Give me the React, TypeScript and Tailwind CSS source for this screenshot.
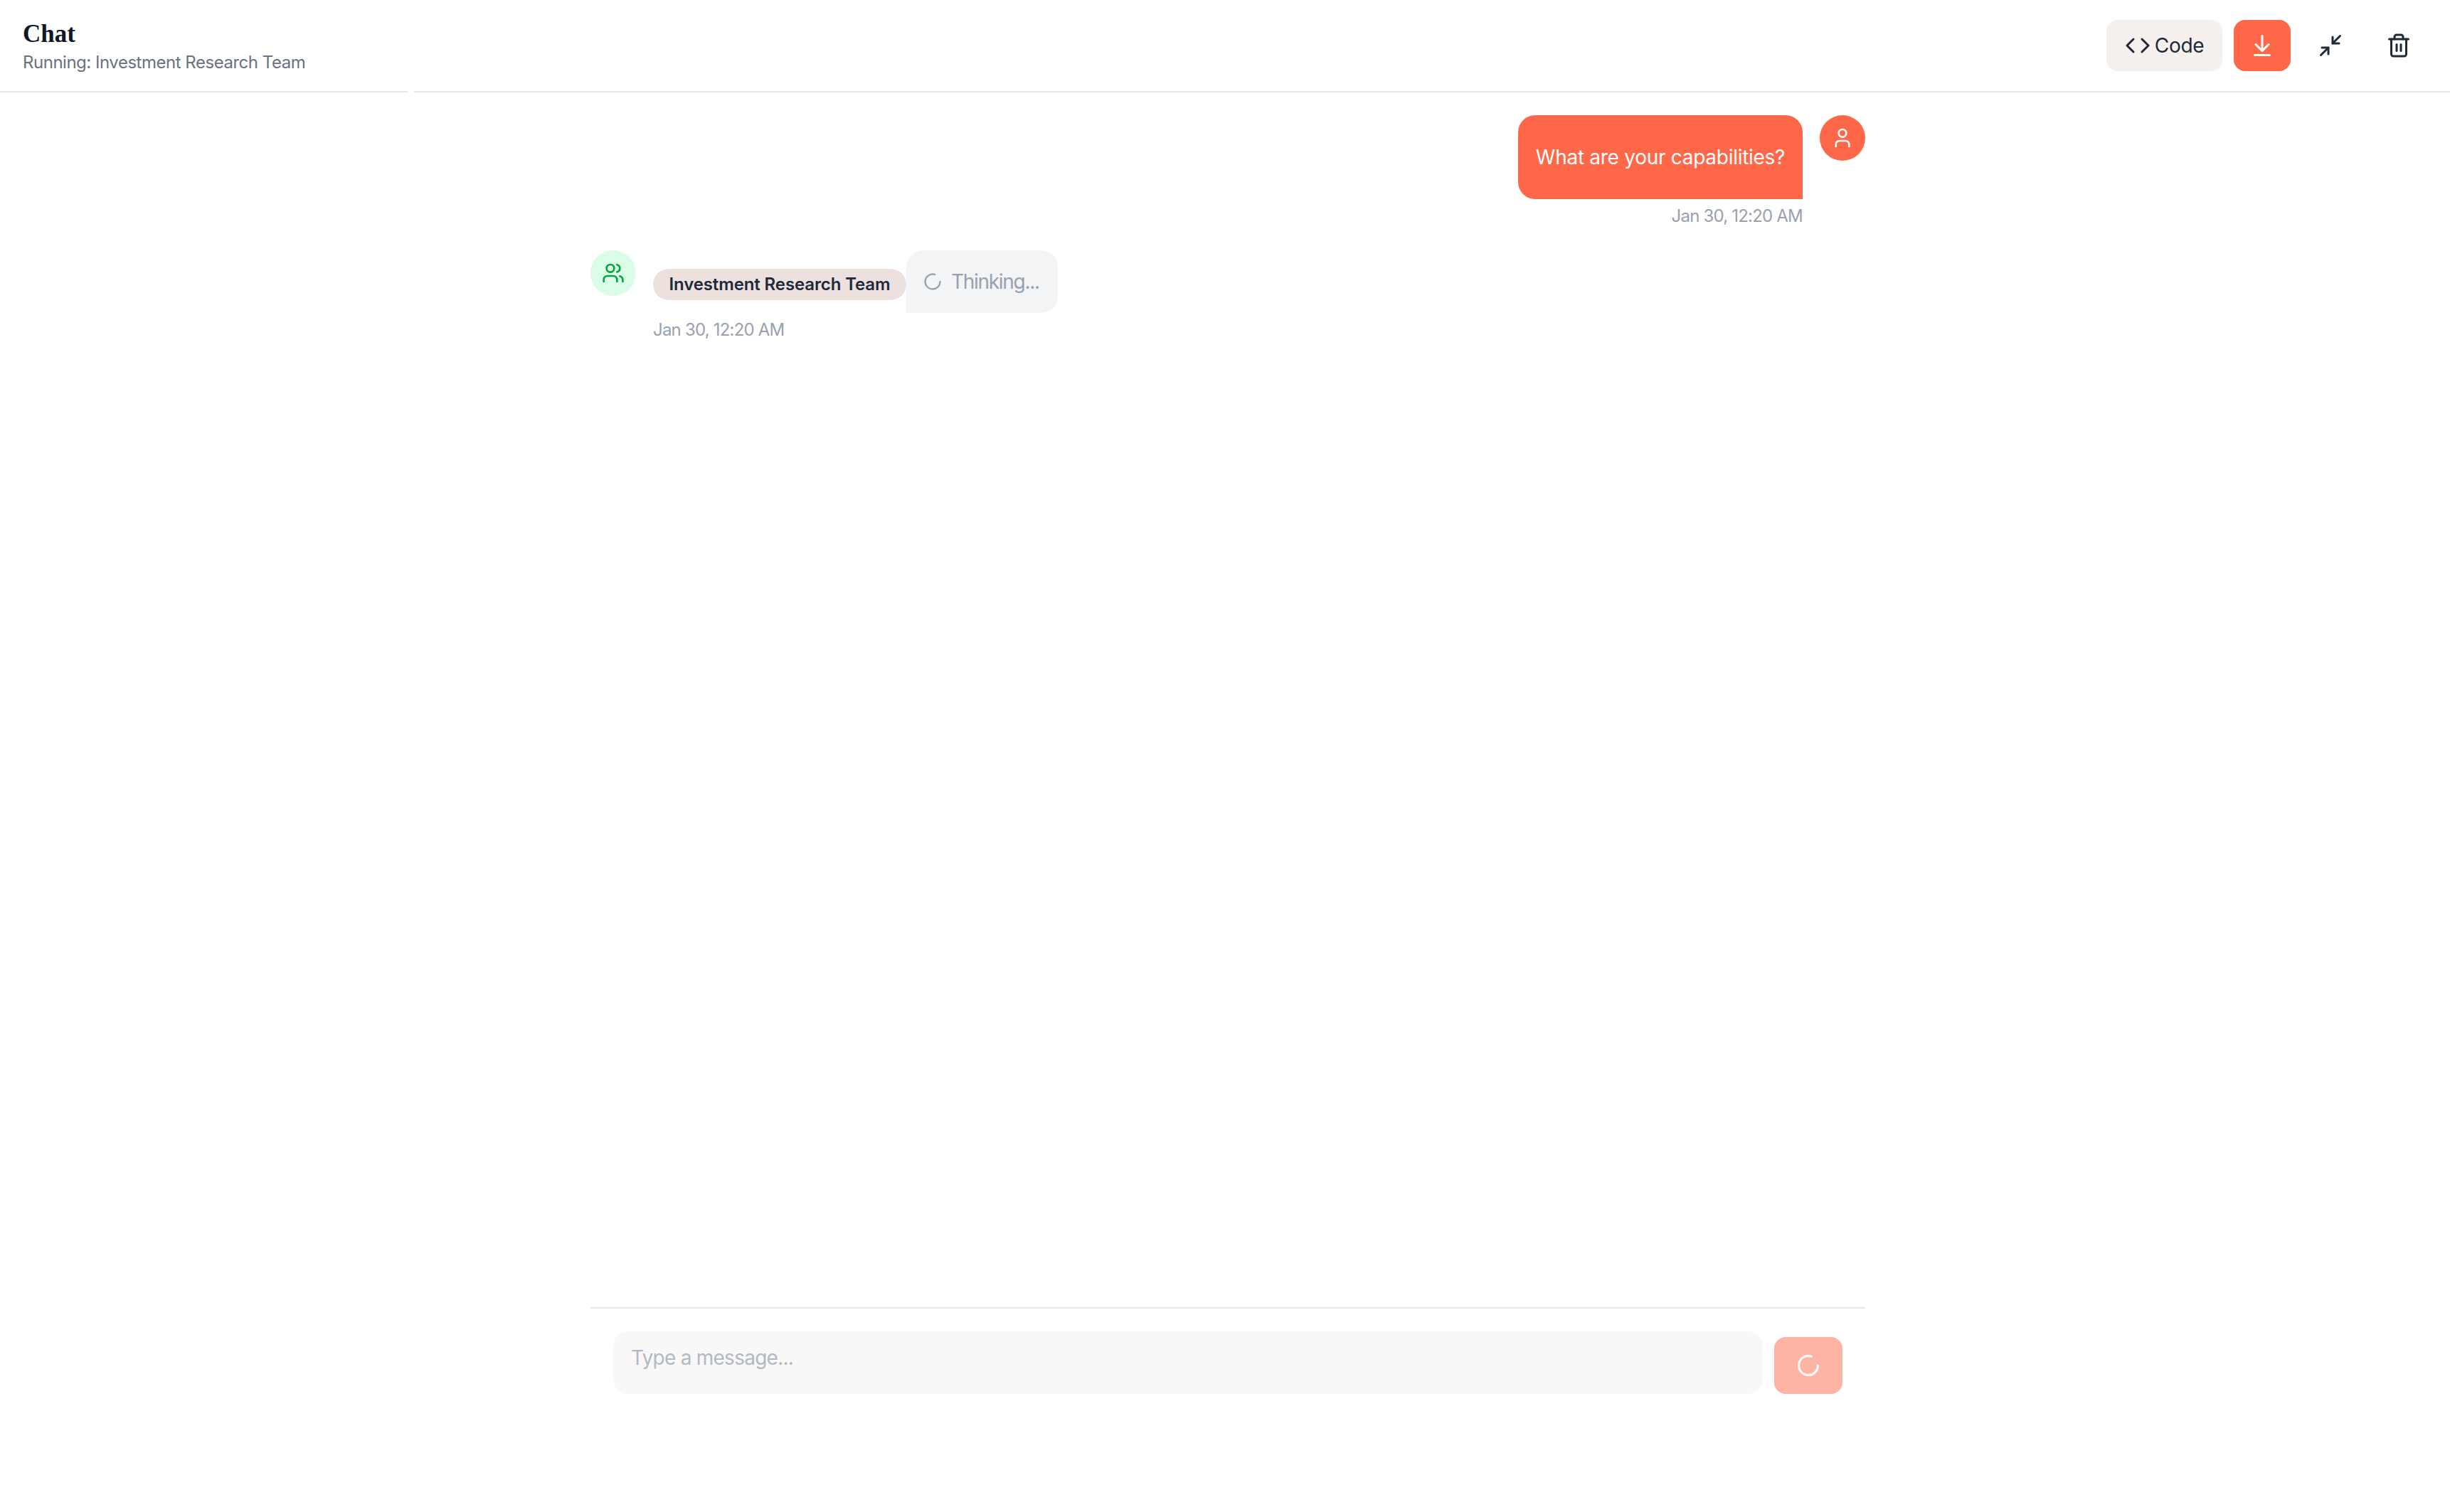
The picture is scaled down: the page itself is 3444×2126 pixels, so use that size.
import { ArrowDownToLine, Code, LoaderCircle, Minimize2, Trash2, User, Users } from "lucide-react";

const sans = "font-['Inter','Liberation_Sans',sans-serif]";

export default function App() {
  return (
    <div className={`relative flex h-screen w-full flex-col overflow-hidden bg-white ${sans}`}>
      <header className="flex h-[130px] shrink-0 items-center justify-between border-b-2 border-gray-200 px-8">
        <div className="mt-[2px] flex flex-col">
          <h1 className="font-['Liberation_Serif',serif] text-[35px] leading-[44px] font-bold text-gray-900">Chat</h1>
          <p className="mt-[2px] text-[24px] leading-[32px] tracking-[-0.48px] text-gray-500">Running: Investment Research Team</p>
        </div>
        <div className="flex items-center gap-4">
          <button className="flex h-[72px] w-[163px] items-center justify-center gap-[6px] rounded-2xl bg-[#f5f0ee] text-[28px] tracking-[-0.3px] text-gray-800">
            <Code size={36} />
            Code
          </button>
          <button className="flex h-[72px] w-20 items-center justify-center rounded-2xl bg-[#ff6749] text-white">
            <ArrowDownToLine size={36} />
          </button>
          <button className="flex h-[72px] w-20 items-center justify-center rounded-2xl text-gray-800">
            <Minimize2 size={36} />
          </button>
          <button className="flex h-[72px] w-20 items-center justify-center rounded-2xl text-gray-800">
            <Trash2 size={36} />
          </button>
        </div>
      </header>
      <div className="absolute top-[128px] left-[573px] h-[2px] w-[9px] bg-white" />

      <main className="ml-[830px] flex w-[1792px] flex-1 flex-col gap-8 pt-8">
        <div className="flex justify-end gap-6">
          <div className="flex flex-col items-end">
            <div className="flex h-[118px] w-[400px] items-center justify-center rounded-3xl rounded-br-none bg-[#ff6749] text-[28px] tracking-[-0.28px] text-white">
              What are your capabilities?
            </div>
            <span className="mt-2 text-[24px] leading-8 tracking-[-0.8px] text-gray-400">Jan 30, 12:20 AM</span>
          </div>
          <div className="flex h-16 w-16 items-center justify-center rounded-full bg-[#ff6749] text-white">
            <User size={32} />
          </div>
        </div>

        <div className="flex gap-6">
          <div className="flex h-16 w-16 items-center justify-center rounded-full bg-green-100 text-green-600">
            <Users size={32} />
          </div>
          <div className="flex flex-col">
            <div className="flex items-start">
              <span className="mt-[26px] flex h-11 w-[356px] items-center justify-center rounded-full bg-[#ede1df] text-[24px] font-semibold tracking-[-0.12px] text-gray-800">
                Investment Research Team
              </span>
              <div className="flex h-[88px] w-[213px] items-center gap-3 rounded-3xl rounded-bl-none bg-gray-100 pl-[23px] text-[28px] tracking-[-1.3px] text-gray-400">
                <LoaderCircle size={28} />
                Thinking...
              </div>
            </div>
            <span className="mt-2 text-[24px] leading-8 tracking-[-0.8px] text-gray-400">Jan 30, 12:20 AM</span>
          </div>
        </div>
      </main>

      <footer className="ml-[830px] flex h-[288px] w-[1792px] shrink-0 items-start gap-4 border-t-2 border-gray-200 px-8 pt-8">
        <div className="flex h-[88px] flex-1 items-start rounded-[20px] bg-[#f9f8f7] pt-[17px] pl-[25px] text-[28px] leading-10 tracking-[-0.75px] text-[#b2b8c6]">
          Type a message...
        </div>
        <button className="mt-2 flex h-20 w-24 items-center justify-center rounded-2xl bg-[#ffb3a4] text-white">
          <LoaderCircle size={36} />
        </button>
      </footer>
    </div>
  );
}
